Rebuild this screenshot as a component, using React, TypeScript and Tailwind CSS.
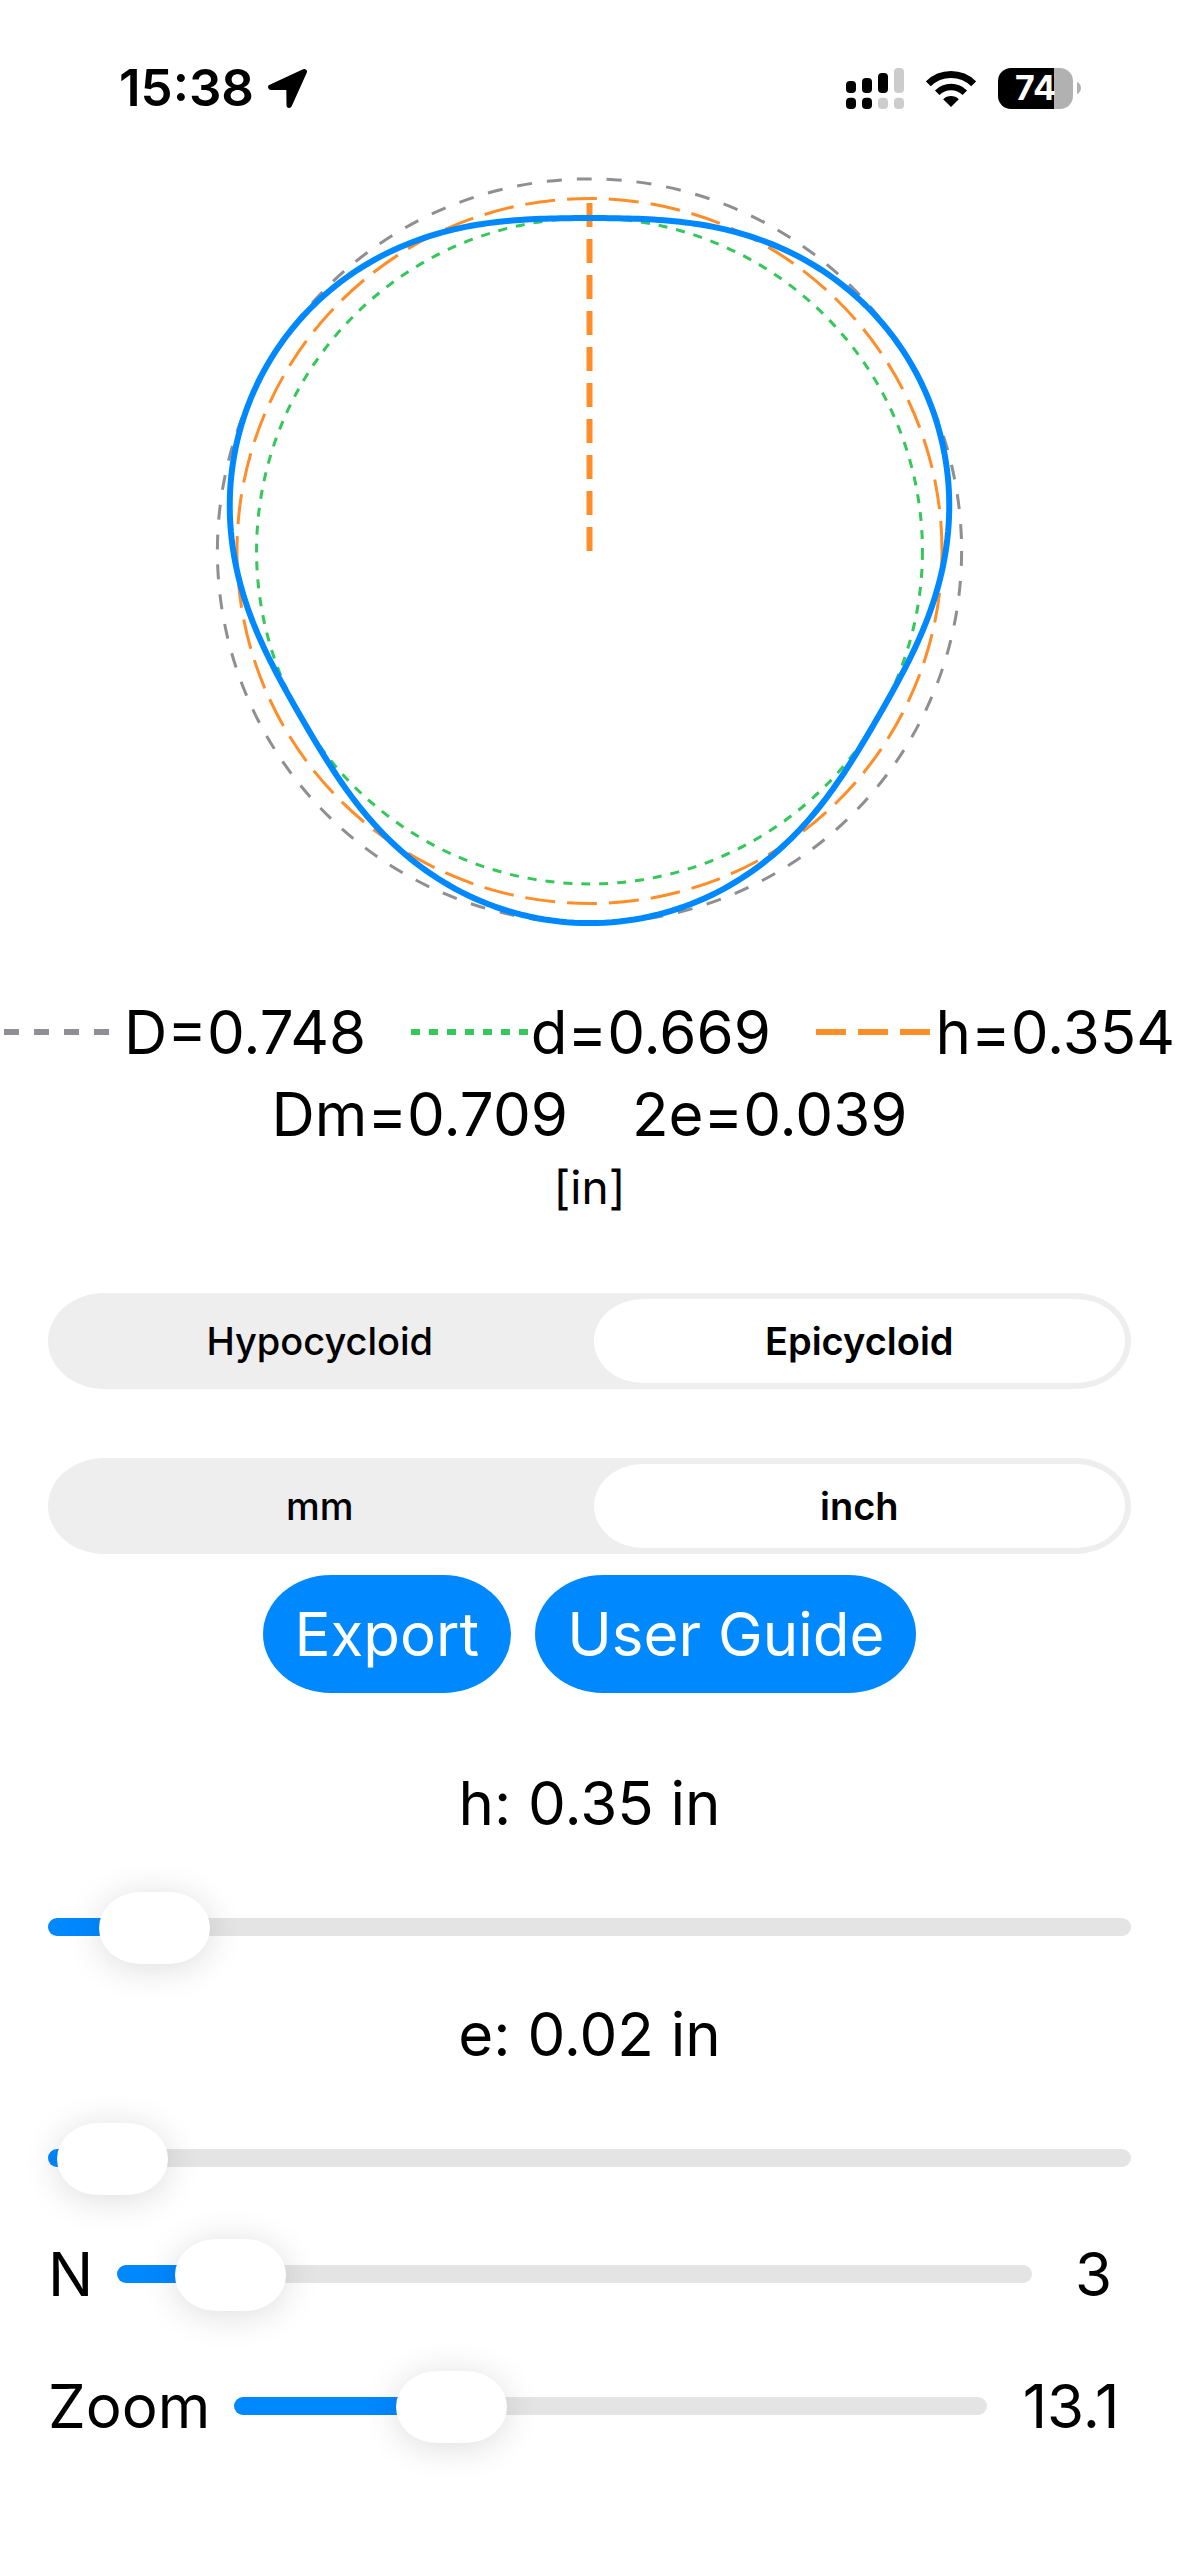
import React, { useState } from 'react';
import { clsx } from 'clsx';

const MM_PER_INCH = 25.4;

type Unit = 'mm' | 'inch';
type Cycloid = 'Hypocycloid' | 'Epicycloid';

const StatusBar: React.FC = () => (
  <header className="flex h-[168px] items-center justify-between pt-2 pr-[98px] pl-[119px]">
    <div className="flex items-center gap-[14px]">
      <time className="text-[51px] leading-[56px] font-semibold">15:38</time>
      <svg width="39" height="39" viewBox="0 0 39 39" aria-hidden="true">
        <path
          d="M36.2 2.8 L2.8 18.2 L21 18.4 L21.2 36.2 Z"
          fill="black"
          stroke="black"
          strokeWidth="5.4"
          strokeLinejoin="round"
        />
      </svg>
    </div>
    <div className="flex items-center gap-[22px]">
      <svg width="58" height="41" viewBox="0 0 58 41" aria-hidden="true">
        <rect x="0" y="13" width="10" height="12" rx="4" />
        <rect x="16" y="10" width="10" height="15" rx="4" />
        <rect x="32" y="5" width="10" height="20" rx="4" />
        <rect x="48" y="0" width="10" height="25" rx="4" fill="#cccccc" />
        <rect x="0" y="29.7" width="10" height="11.3" rx="4" />
        <rect x="16" y="29.7" width="10" height="11.3" rx="4" />
        <rect x="32" y="29.7" width="10" height="11.3" rx="4" fill="#cccccc" />
        <rect x="48" y="29.7" width="10" height="11.3" rx="4" fill="#cccccc" />
      </svg>
      <svg width="50" height="37" viewBox="0 0 50 37" aria-hidden="true">
        <path d="M2.3 13.8 A32.3 32.3 0 0 1 47.7 13.8" fill="none" stroke="black" strokeWidth="7" />
        <path d="M11.2 22.7 A19.7 19.7 0 0 1 38.8 22.7" fill="none" stroke="black" strokeWidth="6.4" />
        <path d="M25 37 L17.2 29.2 A11 11 0 0 1 32.8 29.2 Z" />
      </svg>
      <div className="flex items-center gap-1">
        <div className="flex h-[41px] w-[75px] items-center justify-center rounded-[13px] bg-linear-to-r from-black from-75% to-[#b1b1b1] to-75% text-[34px] leading-none font-bold text-white">
          74
        </div>
        <svg width="4" height="12" viewBox="0 0 4 12" aria-hidden="true">
          <path d="M0 0 C5.3 2 5.3 10 0 12 Z" fill="#b1b1b1" />
        </svg>
      </div>
    </div>
  </header>
);

interface ProfileProps {
  cycloid: Cycloid;
  h: number;
  e: number;
  n: number;
  zoom: number;
}

const Profile: React.FC<ProfileProps> = ({ cycloid, h, e, n, zoom }) => {
  const scale = zoom * 2.99;
  const r = h * scale;
  const ecc = e * scale;
  const k = cycloid === 'Epicycloid' ? n + 1 : 1 - n;

  const points: string[] = [];
  for (let deg = 0; deg < 360; deg++) {
    const t = (deg * Math.PI) / 180;
    const x = r * Math.sin(t) - ecc * Math.sin(k * t);
    const y = -r * Math.cos(t) + ecc * Math.cos(k * t);
    points.push(`${x.toFixed(2)},${y.toFixed(2)}`);
  }

  return (
    <svg className="h-[766px] w-full" viewBox="-589.5 -383 1179 766" fill="none" role="img" aria-label="Cycloid profile">
      <circle r={r + ecc} stroke="#8e8e93" strokeWidth="3" strokeDasharray="15 15" />
      <circle r={r - ecc} stroke="#34c759" strokeWidth="3" strokeDasharray="9 9" />
      <circle r={r} stroke="#ff8d28" strokeWidth="3" strokeDasharray="30 12" />
      <line x1="0" y1="0" x2="0" y2={-r} stroke="#ff8d28" strokeWidth="6" strokeDasharray="24 12" />
      <polygon points={points.join(' ')} stroke="#0088ff" strokeWidth="6" strokeLinejoin="round" />
    </svg>
  );
};

const LegendItem: React.FC<{ color: string; dash: string; text: string }> = ({ color, dash, text }) => (
  <div className="flex items-center">
    <svg width="120" height="6" viewBox="0 0 120 6" aria-hidden="true">
      <line x1="0" y1="3" x2="120" y2="3" stroke={color} strokeWidth="6" strokeDasharray={dash} />
    </svg>
    <span>{text}</span>
  </div>
);

interface SegmentedProps<T extends string> {
  label: string;
  options: T[];
  value: T;
  onChange: (value: T) => void;
}

function Segmented<T extends string>({ label, options, value, onChange }: SegmentedProps<T>) {
  return (
    <div role="group" aria-label={label} className="flex h-24 gap-2 rounded-[56px/48px] bg-[#eeeeee] p-[6px]">
      {options.map((option) => (
        <button
          key={option}
          type="button"
          aria-pressed={option === value}
          onClick={() => onChange(option)}
          className={clsx(
            'flex-1 rounded-[49px/42px] text-[38px] leading-none',
            option === value ? 'bg-white font-semibold' : 'font-medium'
          )}
        >
          {option}
        </button>
      ))}
    </div>
  );
}

interface SliderProps {
  id: string;
  min: number;
  max: number;
  step?: number;
  value: number;
  onChange: (value: number) => void;
}

const Slider: React.FC<SliderProps> = ({ id, min, max, step, value, onChange }) => {
  const ratio = (value - min) / (max - min);
  const fill = `calc(56px + (100% - 111px) * ${ratio})`;

  return (
    <input
      id={id}
      type="range"
      min={min}
      max={max}
      step={step ?? 'any'}
      value={value}
      onChange={(ev) => onChange(Number(ev.target.value))}
      style={{ '--fill': fill } as React.CSSProperties}
      className="block h-[72px] w-full min-w-0 flex-1 cursor-pointer appearance-none bg-transparent [&::-webkit-slider-runnable-track]:h-[18px] [&::-webkit-slider-runnable-track]:rounded-full [&::-webkit-slider-runnable-track]:bg-[linear-gradient(to_right,#0088ff_var(--fill),#e4e4e4_var(--fill))] [&::-webkit-slider-thumb]:-mt-[26px] [&::-webkit-slider-thumb]:h-[72px] [&::-webkit-slider-thumb]:w-[111px] [&::-webkit-slider-thumb]:appearance-none [&::-webkit-slider-thumb]:rounded-[41px/36px] [&::-webkit-slider-thumb]:bg-white [&::-webkit-slider-thumb]:shadow-[0_4px_36px_rgba(0,0,0,0.14)]"
    />
  );
};

const PillButton: React.FC<{ children: React.ReactNode }> = ({ children }) => (
  <button type="button" className="h-[118px] rounded-[68px/59px] bg-[#0088ff] px-8 text-white">
    {children}
  </button>
);

export default function App() {
  const [cycloid, setCycloid] = useState<Cycloid>('Epicycloid');
  const [unit, setUnit] = useState<Unit>('inch');
  const [h, setH] = useState(9);
  const [e, setE] = useState(0.5);
  const [n, setN] = useState(3);
  const [zoom, setZoom] = useState(13.1);

  const suffix = unit === 'inch' ? 'in' : 'mm';
  const format = (mm: number, digits: number) => (unit === 'inch' ? mm / MM_PER_INCH : mm).toFixed(digits);

  return (
    <div className="min-h-screen overflow-x-hidden bg-white font-[Inter,sans-serif] text-[60px] leading-[76px] text-black">
      <StatusBar />
      <main>
        <Profile cycloid={cycloid} h={h} e={e} n={n} zoom={zoom} />

        <section className="mt-[57px] flex flex-col items-center whitespace-pre leading-[82px]">
          <div className="flex w-full justify-between px-1">
            <LegendItem color="#8e8e93" dash="15 15" text={`D=${format(2 * (h + e), 3)}`} />
            <LegendItem color="#34c759" dash="9 9" text={`d=${format(2 * (h - e), 3)}`} />
            <LegendItem color="#ff8d28" dash="30 12" text={`h=${format(h, 3)}`} />
          </div>
          <div className="flex gap-16">
            <span>{`Dm=${format(2 * h, 3)}`}</span>
            <span>{`2e=${format(2 * e, 3)}`}</span>
          </div>
          <div className="text-[46px] leading-[64px]">{`[${suffix}]`}</div>
        </section>

        <section className="mt-[74px] flex flex-col gap-[69px] px-12">
          <Segmented label="Curve" options={['Hypocycloid', 'Epicycloid']} value={cycloid} onChange={setCycloid} />
          <Segmented label="Units" options={['mm', 'inch']} value={unit} onChange={setUnit} />
        </section>

        <div className="mt-[21px] flex justify-center gap-6">
          <PillButton>Export</PillButton>
          <PillButton>User Guide</PillButton>
        </div>

        <section className="mt-[72px] flex flex-col px-12">
          <label htmlFor="h" className="text-center">{`h: ${format(h, 2)} ${suffix}`}</label>
          <div className="mt-[50px] flex">
            <Slider id="h" min={1} max={153} value={h} onChange={setH} />
          </div>
          <label htmlFor="e" className="mt-[33px] text-center">{`e: ${format(e, 2)} ${suffix}`}</label>
          <div className="mt-[50px] flex">
            <Slider id="e" min={0.1} max={43.3} value={e} onChange={setE} />
          </div>
          <div className="mt-[42px] flex items-center gap-6">
            <label htmlFor="n">N</label>
            <Slider id="n" min={2} max={16} step={1} value={n} onChange={setN} />
            <output htmlFor="n" className="w-[75px] text-center">{n}</output>
          </div>
          <div className="mt-14 flex items-center gap-6">
            <label htmlFor="zoom">Zoom</label>
            <Slider id="zoom" min={1} max={49} value={zoom} onChange={setZoom} />
            <output htmlFor="zoom" className="w-[120px] text-center">{zoom.toFixed(1)}</output>
          </div>
        </section>
      </main>
    </div>
  );
}
